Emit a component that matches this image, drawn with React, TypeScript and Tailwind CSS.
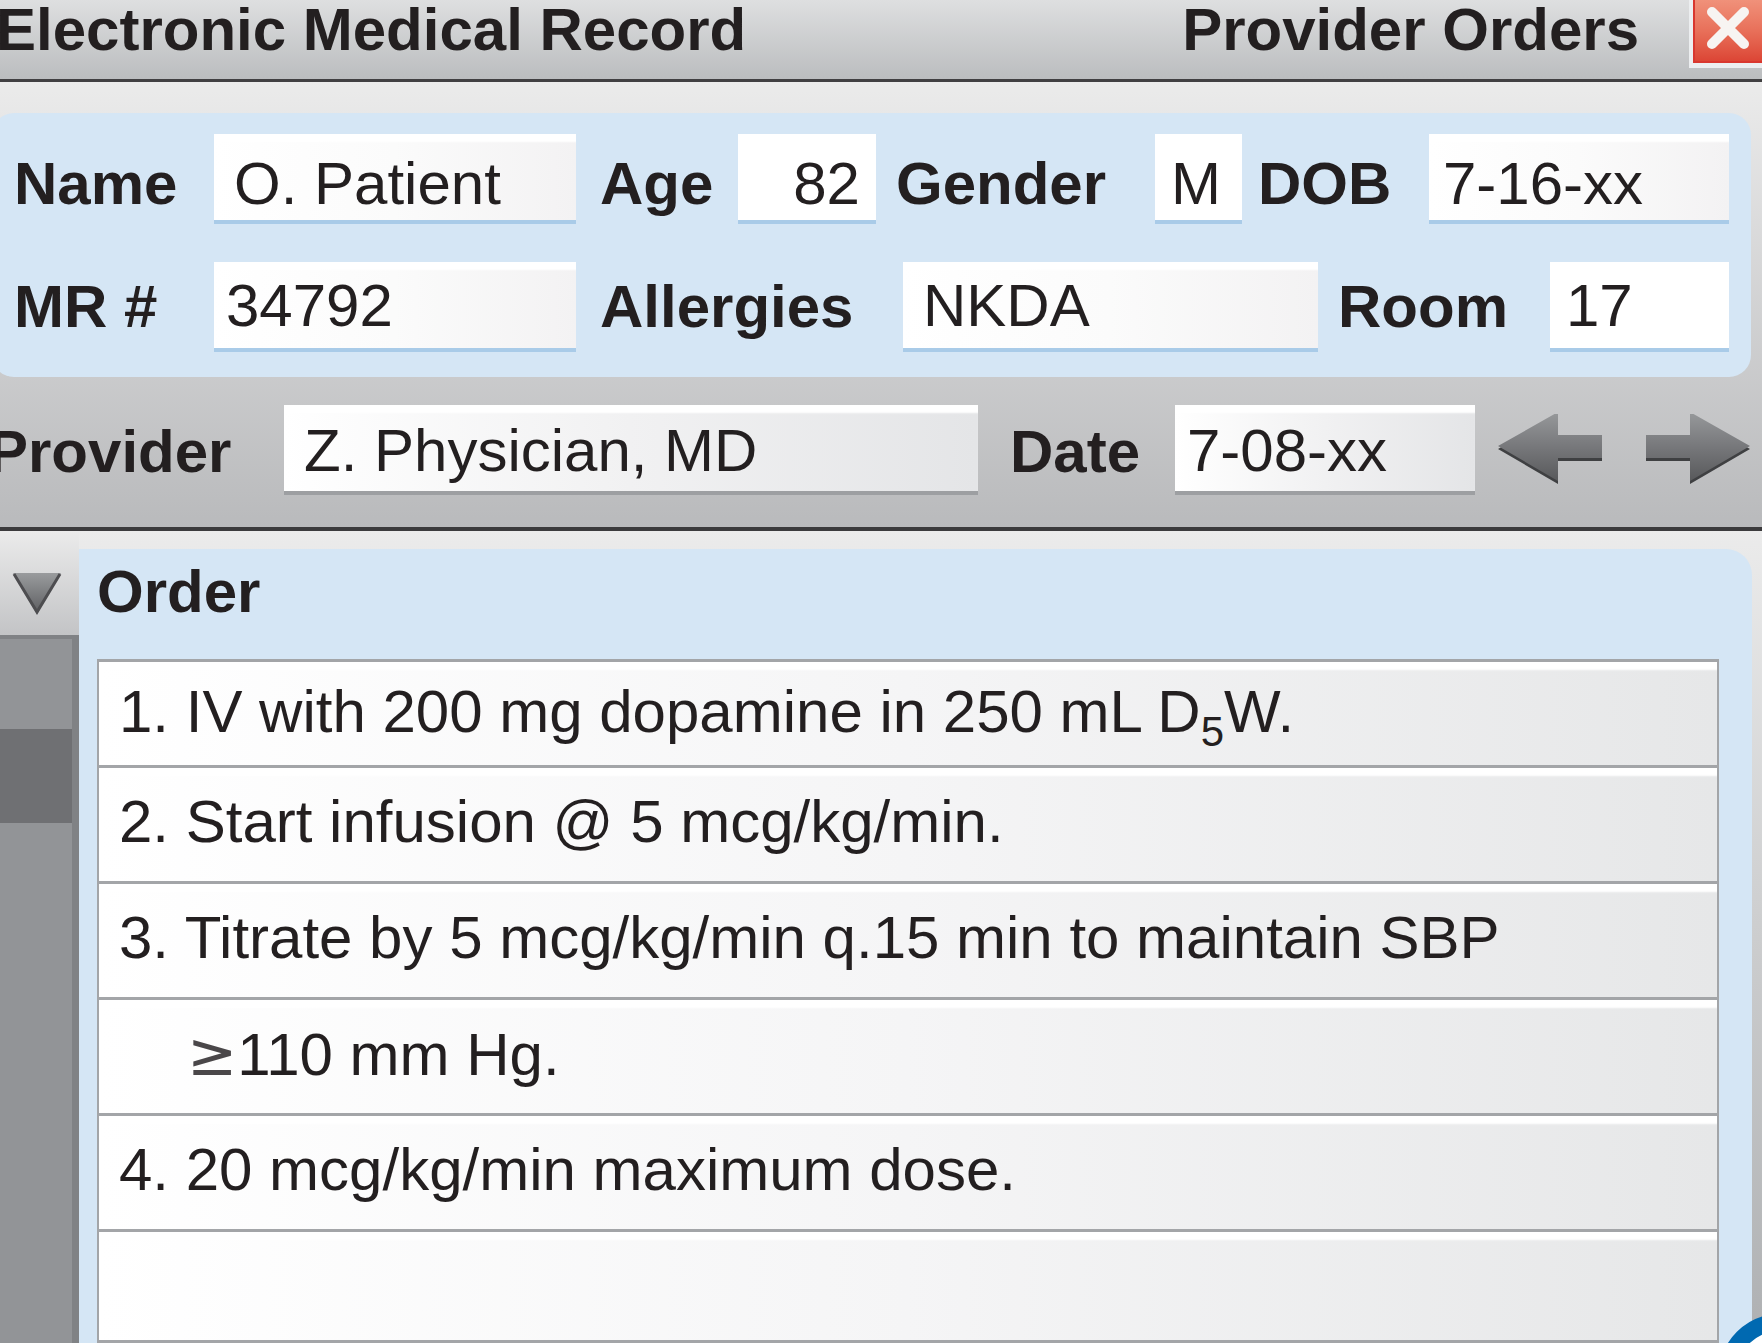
import { useState } from "react";
import type { ReactNode } from "react";
import { clsx } from "clsx";

const labelText = "font-bold whitespace-nowrap leading-[60px]";

// Gray fields sit on the toolbar, blue ones on the patient banner.
const tones = {
  blue: "border-[#a9cbe8] bg-linear-to-r from-white via-[#fbfbfb] to-[#f3f2f3]",
  gray: "border-[#9d9fa2] bg-linear-to-r from-white via-[#f1f1f2] to-[#e4e5e7]",
  plain: "border-[#a9cbe8] bg-white",
};

type FieldProps = {
  id: string;
  label: string;
  value: string;
  tone?: keyof typeof tones;
  labelClass?: string;
  inputClass?: string;
};

function Field({ id, label, value, tone = "blue", labelClass, inputClass }: FieldProps) {
  const [text, setText] = useState(value);

  return (
    <>
      <label htmlFor={id} className={clsx(labelText, labelClass)}>
        {label}
      </label>
      <input
        id={id}
        type="text"
        value={text}
        onChange={(e) => setText(e.target.value)}
        className={clsx(
          "h-[90px] w-full min-w-0 border-b-4 leading-[60px] shadow-[inset_0_9px_2px_-1px_#fff] outline-none",
          tones[tone],
          inputClass,
        )}
      />
    </>
  );
}

const orders: { id: string; text: ReactNode; indent?: boolean }[] = [
  {
    id: "iv",
    text: (
      <>
        1. IV with 200 mg dopamine in 250 mL D<sub className="-bottom-3.5 text-[42px]">5</sub>W.
      </>
    ),
  },
  { id: "start", text: "2. Start infusion @ 5 mcg/kg/min." },
  { id: "titrate", text: "3. Titrate by 5 mcg/kg/min q.15 min to maintain SBP" },
  {
    id: "titrate-target",
    text: (
      <>
        <span className="font-['DejaVu_Sans',sans-serif] text-[#4a4749]">≥</span>110 mm Hg.
      </>
    ),
    indent: true,
  },
  { id: "max", text: "4. 20 mcg/kg/min maximum dose." },
  { id: "blank", text: "" },
];

function ArrowIcon({ direction }: { direction: "left" | "right" }) {
  const points =
    direction === "left"
      ? "0,35 60,1 60,24 104,24 104,47 60,47 60,70"
      : "104,35 44,1 44,24 0,24 0,47 44,47 44,70";
  const shade = `arrow-${direction}`;

  return (
    <svg viewBox="0 0 104 72" className="h-[72px] w-[104px]" aria-hidden="true">
      <defs>
        <linearGradient id={shade} x1="0" y1="0" x2="0" y2="1">
          <stop offset="0" stopColor="#97999b" />
          <stop offset="0.5" stopColor="#77787b" />
          <stop offset="1" stopColor="#58595b" />
        </linearGradient>
      </defs>
      <polygon points={points} fill="#3f4042" />
      <polygon points={points} fill={`url(#${shade})`} transform="translate(0 -3)" />
    </svg>
  );
}

function TitleBar() {
  return (
    <header className="flex h-[82px] items-start border-b-3 border-[#414042] bg-linear-to-b from-[#dedfe0] to-[#bbbdbf] pl-2">
      <h1 className={labelText}>Electronic Medical Record</h1>
      <p className={clsx(labelText, "ml-auto mr-[50px]")}>Provider Orders</p>
      <button
        type="button"
        aria-label="Close"
        className="flex h-[68px] w-[73px] border-b-5 border-l-4 border-[#eceef0] bg-white"
      >
        <span className="flex h-[63px] w-full items-start justify-center border-b-2 border-l-2 border-[#d9372f] bg-linear-to-b from-[#f0917a] via-[#e8705a] to-[#dc4535] pt-1">
          <svg viewBox="0 0 48 48" className="size-12" aria-hidden="true">
            <path
              d="M7 8 L39 40 M39 8 L7 40"
              stroke="#f7f4f2"
              strokeWidth="10"
              strokeLinecap="round"
              fill="none"
            />
          </svg>
        </span>
      </button>
    </header>
  );
}

function PatientBanner() {
  return (
    <section
      aria-label="Patient"
      className="mr-[11px] ml-1 flex flex-col gap-[38px] rounded-[22px] bg-[#d5e6f5] pt-[21px] pr-[22px] pb-[25px] pl-[18px]"
    >
      <div className="grid grid-cols-[204px_362fr_162px_138fr_279px_87fr_187px_300fr] items-center">
        <Field id="name" label="Name" value="O. Patient" labelClass="pt-2.5 pl-1" inputClass="pt-3 pl-5" />
        <Field
          id="age"
          label="Age"
          value="82"
          tone="plain"
          labelClass="pt-2.5 pl-6"
          inputClass="pt-3 pr-4 text-right"
        />
        <Field
          id="gender"
          label="Gender"
          value="M"
          tone="plain"
          labelClass="pt-2.5 pl-5"
          inputClass="pt-3 pl-4"
        />
        <Field id="dob" label="DOB" value="7-16-xx" labelClass="pt-2.5 pl-4" inputClass="pt-3 pl-3.5" />
      </div>
      <div className="grid grid-cols-[204px_362fr_327px_415fr_232px_179fr] items-center">
        <Field id="mr" label="MR #" value="34792" labelClass="pl-1" inputClass="pl-3" />
        <Field id="allergies" label="Allergies" value="NKDA" labelClass="pl-6" inputClass="pl-5" />
        <Field id="room" label="Room" value="17" tone="plain" labelClass="pl-5" inputClass="pl-4" />
      </div>
    </section>
  );
}

function ProviderBar() {
  return (
    <section
      aria-label="Provider"
      className="mt-7 grid grid-cols-[296px_694fr_197px_300fr_287px] items-center"
    >
      <Field
        id="provider"
        label="Provider"
        value="Z. Physician, MD"
        tone="gray"
        labelClass="pt-1"
        inputClass="pt-1 pl-5"
      />
      <Field
        id="date"
        label="Date"
        value="7-08-xx"
        tone="gray"
        labelClass="pt-1 pl-8"
        inputClass="pt-1 pl-3"
      />
      <div className="flex justify-end gap-11 pr-3">
        <button type="button" aria-label="Previous date">
          <ArrowIcon direction="left" />
        </button>
        <button type="button" aria-label="Next date">
          <ArrowIcon direction="right" />
        </button>
      </div>
    </section>
  );
}

function SideRail() {
  return (
    <aside className="flex w-[91px] shrink-0 flex-col">
      <button
        type="button"
        aria-label="Scroll down"
        className="flex h-[104px] w-full items-center justify-end bg-linear-to-b from-[#ebebeb] to-[#c3c4c6] pt-[26px] pr-[17px] pb-1"
      >
        <svg viewBox="0 0 50 42" className="h-[42px] w-[50px]" aria-hidden="true">
          <defs>
            <linearGradient id="caret" x1="0" y1="0" x2="0" y2="1">
              <stop offset="0" stopColor="#9a9c9e" />
              <stop offset="1" stopColor="#5c5d60" />
            </linearGradient>
          </defs>
          <polygon points="1,0 49,0 25,41" fill="url(#caret)" />
          <path d="M2 1 L25 39 L48 1" fill="none" stroke="#4d4d50" strokeWidth="3" />
        </svg>
      </button>
      <div className="flex-1 border-t-4 border-r-7 border-[#808285] bg-[#929497] pt-[90px]">
        <div className="h-[94px] bg-[#6f7073]" />
      </div>
    </aside>
  );
}

function OrderPanel() {
  return (
    <section
      aria-labelledby="order-title"
      className="mt-[18px] mr-2.5 min-w-0 flex-1 rounded-tr-[26px] bg-[#d5e6f5] pr-[33px] pl-[18px]"
    >
      <h2 id="order-title" className={clsx(labelText, "h-[110px] pt-[13px]")}>
        Order
      </h2>
      <table
        aria-labelledby="order-title"
        className="w-full border-separate border-spacing-0 border-x-2 border-t-3 border-[#a3a5a8]"
      >
        <tbody>
          {orders.map((order, i) => (
            <tr key={order.id}>
              <td
                className={clsx(
                  "border-b-3 border-[#a3a5a8] bg-linear-to-r from-white via-[#f5f5f6] to-[#e6e7e8] align-top leading-[60px] shadow-[inset_0_9px_2px_-1px_#fff]",
                  i === 0 ? "h-[106px] pt-5" : "pt-6",
                  i > 0 && i < orders.length - 1 && "h-[116px]",
                  i === orders.length - 1 && "h-[111px]",
                  order.indent ? "pl-[88px]" : "pl-5",
                )}
              >
                {order.text}
              </td>
            </tr>
          ))}
        </tbody>
      </table>
    </section>
  );
}

export default function App() {
  return (
    <main className="relative min-h-screen overflow-hidden bg-[#e6e6e6] font-['Liberation_Sans',Arial,sans-serif] text-[60px] text-[#231f20]">
      {/* The window runs slightly past the left edge of the page */}
      <div className="-ml-3 flex min-h-screen flex-col">
        <TitleBar />
        <div className="border-b-4 border-[#3b3a3c] bg-linear-to-b from-[#ebebeb] to-[#b9babc] pt-[31px] pb-8">
          <PatientBanner />
          <ProviderBar />
        </div>
        <div className="flex flex-1 bg-linear-to-b from-[#ebebeb] to-[#aeb0b2]">
          <SideRail />
          <OrderPanel />
        </div>
      </div>
      <button
        type="button"
        aria-label="Help"
        className="absolute -right-[79px] -bottom-[93px] size-[122px] rounded-full border-[17px] border-[#0069b1] bg-white"
      />
    </main>
  );
}
